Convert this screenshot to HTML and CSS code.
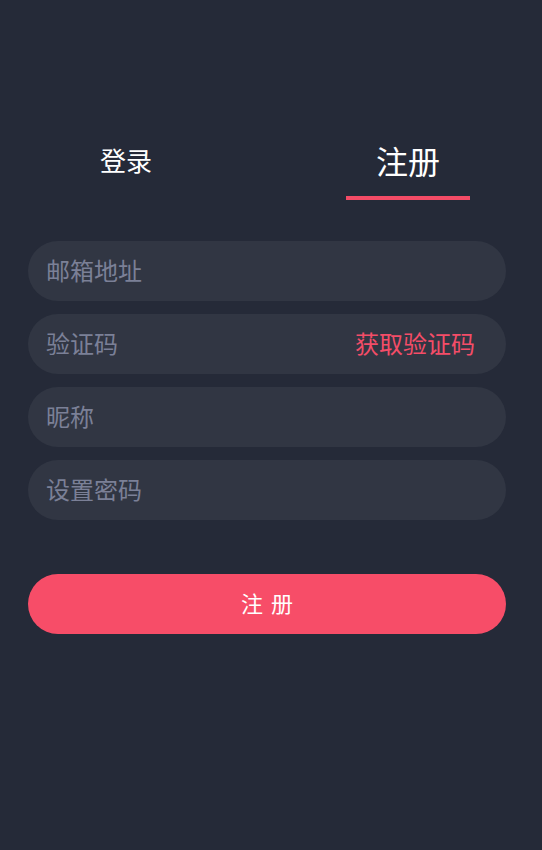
FILE: index.html
```html
<!DOCTYPE html>
<html>
  <head>
    <meta charset="utf-8">
    <title>注册</title>
    <link rel="stylesheet" href="styles.css">
  </head>
  <body>
    <div class="page">
      <div class="tabs">
        <div class="tab">登录</div>
        <div class="tab active">注册</div>
      </div>
      <form class="form">
        <div class="field">
          <input type="text" placeholder="邮箱地址">
        </div>
        <div class="field">
          <input type="text" placeholder="验证码">
          <span class="get-code">获取验证码</span>
        </div>
        <div class="field">
          <input type="text" placeholder="昵称">
        </div>
        <div class="field">
          <input type="password" placeholder="设置密码">
        </div>
        <button type="button" class="submit">注册</button>
      </form>
    </div>
  </body>
</html>
```

FILE: styles.css
```css
body {
  margin: 0;
  background-color: #252a38;
  color: white;
  font-family: "Noto Sans CJK SC", "Noto Sans", sans-serif;
}
.page {
  padding: 141px 36px 0 28px;
  width: 478px;
}
.tabs {
  display: flex;
  justify-content: space-between;
  padding: 0 36px;
}
.tab {
  width: 124px;
  height: 38px;
  line-height: 38px;
  text-align: center;
  font-size: 26px;
}
.tab.active {
  font-size: 32px;
  height: 59px;
  line-height: 38px;
  box-sizing: border-box;
  border-bottom: 4px solid #f34b66;
}
.form {
  margin: 41px 0 0 0;
  display: flex;
  flex-direction: column;
  gap: 13px;
}
.field {
  display: flex;
  align-items: center;
  height: 60px;
  box-sizing: border-box;
  border-radius: 30px;
  background-color: #313643;
  padding: 0 31px 3px 18px;
}
.field input {
  flex: 1;
  min-width: 0;
  background: none;
  border: none;
  outline: none;
  padding: 0;
  color: white;
  font-family: inherit;
  font-size: 24px;
}
.field input::placeholder {
  color: #7b8097;
}
.get-code {
  color: #f44d68;
  font-size: 24px;
}
.submit {
  margin-top: 41px;
  height: 60px;
  border: none;
  border-radius: 30px;
  background-color: #f74d68;
  color: white;
  font-family: inherit;
  font-size: 22px;
  letter-spacing: 8px;
  padding: 0 0 4px 8px;
}
```
